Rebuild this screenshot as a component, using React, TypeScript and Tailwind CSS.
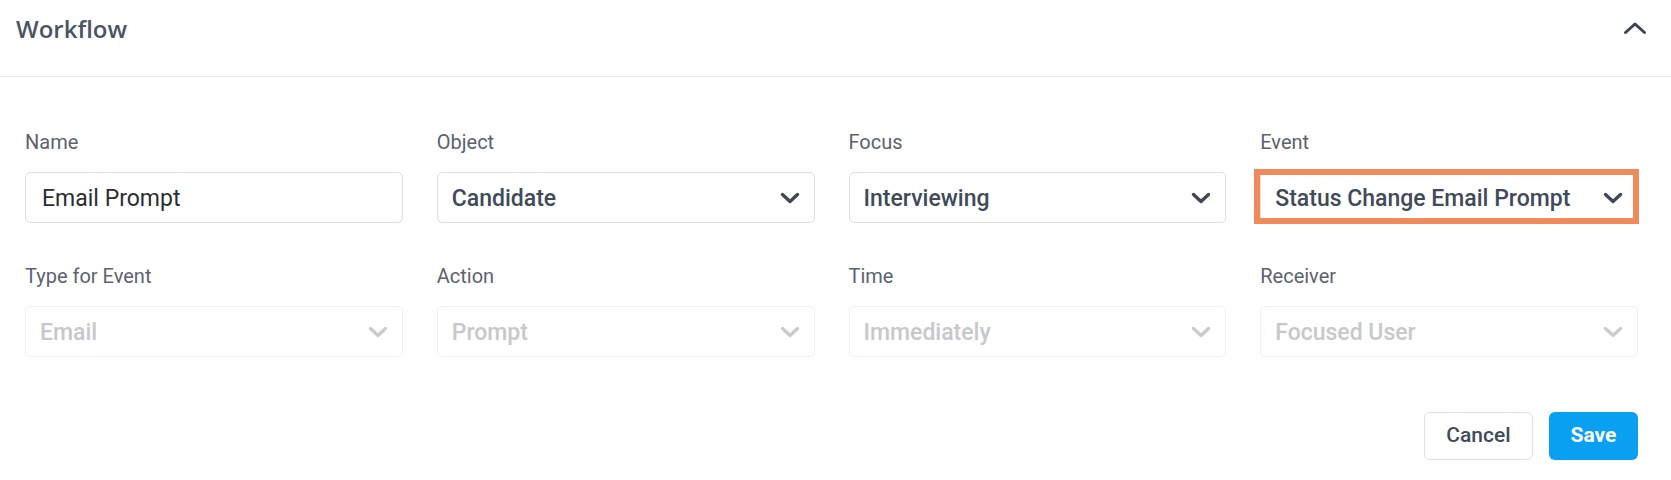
import React from "react";

interface Field {
  label: string;
  value: string;
  kind: "input" | "select";
  disabled?: boolean;
  highlight?: boolean;
}

const fields: Field[] = [
  { label: "Name", value: "Email Prompt", kind: "input" },
  { label: "Object", value: "Candidate", kind: "select" },
  { label: "Focus", value: "Interviewing", kind: "select" },
  { label: "Event", value: "Status Change Email Prompt", kind: "select", highlight: true },
  { label: "Type for Event", value: "Email", kind: "select", disabled: true },
  { label: "Action", value: "Prompt", kind: "select", disabled: true },
  { label: "Time", value: "Immediately", kind: "select", disabled: true },
  { label: "Receiver", value: "Focused User", kind: "select", disabled: true },
];

const ChevronDown = ({ color }: { color: string }) => (
  <svg width="20" height="12" viewBox="0 0 20 12" fill="none" className="-mt-[3px]">
    <polyline
      points="2.5,2.5 10,9.5 17.5,2.5"
      stroke={color}
      strokeWidth="3.4"
      strokeLinecap="round"
      strokeLinejoin="round"
    />
  </svg>
);

const FormField = ({ field }: { field: Field }) => {
  return (
    <div className="flex flex-col">
      <label className="text-[20px] leading-6 text-[#5b6270] mb-[18px]">
        {field.label}
      </label>
      {field.kind === "input" ? (
        <div className="h-[51px] rounded-[5px] border border-[#dcdfe3] flex items-center pl-4 pt-[3px] text-[23px] text-[#2b2d31]">
          {field.value}
        </div>
      ) : (
        <div className="relative">
          <div
            className={`h-[51px] rounded-[5px] border flex items-center justify-between pl-[14px] pr-[14px] pt-[3px] text-[23px] font-medium ${
              field.disabled
                ? "border-[#eef0f2] text-[#c5c8cc]"
                : "border-[#dcdfe3] text-[#404a59]"
            }`}
          >
            <span>{field.value}</span>
            <ChevronDown color={field.disabled ? "#c9cbce" : "#3f4857"} />
          </div>
          {field.highlight && (
            <div className="absolute -left-[6px] -right-[1px] -top-[3px] -bottom-[1px] border-[6px] border-[#f08a5b] pointer-events-none" />
          )}
        </div>
      )}
    </div>
  );
};

export default function App() {
  return (
    <div className="w-full min-h-[480px] bg-white font-['Roboto',sans-serif]">
      <div className="h-[77px] border-b border-[#e7e9ec] flex items-start justify-between pl-4 pr-[24px] pt-[14px]">
        <h2 className="font-['Open_Sans',sans-serif] font-semibold text-[24px] leading-[30px] text-[#4a5464]">
          Workflow
        </h2>
        <svg width="24" height="14" viewBox="0 0 24 14" fill="none" className="mt-[7px]">
          <polyline
            points="2.5,11.5 12,3 21.5,11.5"
            stroke="#3b4451"
            strokeWidth="3"
            strokeLinecap="round"
            strokeLinejoin="round"
          />
        </svg>
      </div>
      <div className="pl-[25px] pr-[33px] pt-[53px]">
        <div className="grid grid-cols-4 gap-x-[34px] gap-y-[41px]">
          {fields.map((f) => (
            <FormField key={f.label} field={f} />
          ))}
        </div>
        <div className="flex justify-end gap-4 mt-[55px]">
          <button className="h-[48px] w-[109px] rounded-[6px] border border-[#dcdfe3] bg-white text-[21px] font-medium text-[#404a59]">
            Cancel
          </button>
          <button className="h-[48px] w-[89px] rounded-[6px] bg-[#0aa0f2] text-[21px] font-bold text-white">
            Save
          </button>
        </div>
      </div>
    </div>
  );
}
